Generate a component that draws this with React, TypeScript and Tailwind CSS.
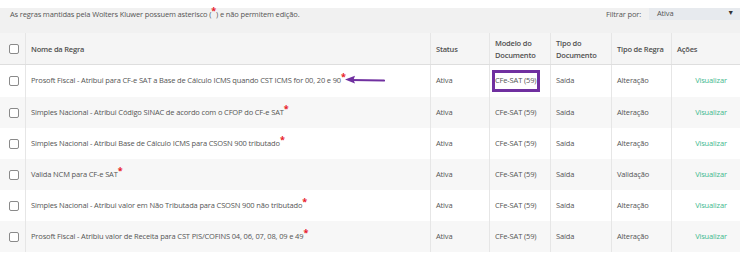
import React from "react";

const COLS = "grid grid-cols-[25px_405px_59px_61px_61px_60px_69px]";

const rows = [
  { name: "Prosoft Fiscal - Atribui para CF-e SAT a Base de Cálculo ICMS quando CST ICMS for 00, 20 e 90", tipo: "Alteração", mark: true },
  { name: "Simples Nacional - Atribui Código SINAC de acordo com o CFOP do CF-e SAT", tipo: "Alteração" },
  { name: "Simples Nacional - Atribui Base de Cálculo ICMS para CSOSN 900 tributado", tipo: "Alteração" },
  { name: "Valida NCM para CF-e SAT", tipo: "Validação" },
  { name: "Simples Nacional - Atribui valor em Não Tributada para CSOSN 900 não tributado", tipo: "Alteração" },
  { name: "Prosoft Fiscal - Atribiu valor de Receita para CST PIS/COFINS 04, 06, 07, 08, 09 e 49", tipo: "Alteração" },
];

function Box() {
  return <span className="block h-[10px] w-[10px] rounded-[2px] border border-[#8a8a8a] bg-white" />;
}

function Star() {
  return <span className="relative -top-[3px] text-[9px] font-bold leading-none text-[#e8202a]">*</span>;
}

function Cell({ children, className = "" }: { children?: React.ReactNode; className?: string }) {
  return <div className={"flex items-center border-l border-[#e6e6e6] pl-[5px] " + className}>{children}</div>;
}

export default function App() {
  return (
    <div className="h-[259px] w-[740px] overflow-hidden bg-white pt-[8px] text-[7.5px] tracking-[-0.15px] text-[#555] [font-family:'Open_Sans',sans-serif]">
      <div className="flex h-[25px] items-start justify-between bg-[#f1f1f1]">
        <p className="pl-[10px] pt-[1px] leading-[11px]">
          As regras mantidas pela Wolters Kluwer possuem asterisco (<Star />) e não permitem edição.
        </p>
        <div className="flex items-start">
          <span className="pr-[8px] pt-[1px] leading-[11px]">Filtrar por:</span>
          <div className="flex h-[12px] w-[91px] items-start justify-between bg-[#e7eaee] pl-[8px] pr-[6px]">
            <span className="leading-[10px]">Ativa</span>
            <span className="text-[7px] leading-[10px] text-[#333]">▼</span>
          </div>
        </div>
      </div>

      <div className={COLS + " h-[32px] border-b border-[#dedede] bg-[#f5f5f5] font-semibold leading-[12px] tracking-[-0.2px] text-[#505050]"}>
        <div className="flex items-center justify-center pl-[3px]">
          <Box />
        </div>
        <Cell>Nome da Regra</Cell>
        <Cell>Status</Cell>
        <Cell>
          <span>
            Modelo do
            <br />
            Documento
          </span>
        </Cell>
        <Cell>
          <span>
            Tipo do
            <br />
            Documento
          </span>
        </Cell>
        <Cell className="whitespace-nowrap">Tipo de Regra</Cell>
        <Cell>Ações</Cell>
      </div>

      {rows.map((r, i) => (
        <div key={i} className={COLS + (i === 0 ? " h-[32px]" : " h-[31px]") + (i % 2 ? " bg-[#f7f7f7]" : " bg-white")}>
          <div className="flex items-center justify-center pl-[3px]">
            <Box />
          </div>
          <Cell className="relative whitespace-nowrap">
            <span>
              {r.name}
              <Star />
            </span>
            {r.mark && (
              <svg className="absolute left-[319px] top-[10px]" width="40" height="10" viewBox="0 0 40 10">
                <line x1="6" y1="5" x2="39" y2="5.5" stroke="#7030a0" strokeWidth="2.2" strokeLinecap="round" />
                <path d="M0 4.6 L10 0.8 L8.5 4.8 L10 8.6 Z" fill="#7030a0" />
              </svg>
            )}
          </Cell>
          <Cell>Ativa</Cell>
          <Cell className="relative whitespace-nowrap">
            CFe-SAT (59)
            {r.mark && <span className="absolute left-[2px] top-[5px] h-[22px] w-[48px] border-[3px] border-[#7030a0]" />}
          </Cell>
          <Cell>Saída</Cell>
          <Cell>{r.tipo}</Cell>
          <Cell className="justify-center pl-[10px]">
            <span className="text-[#3fb98f]">Visualizar</span>
          </Cell>
        </div>
      ))}
    </div>
  );
}
